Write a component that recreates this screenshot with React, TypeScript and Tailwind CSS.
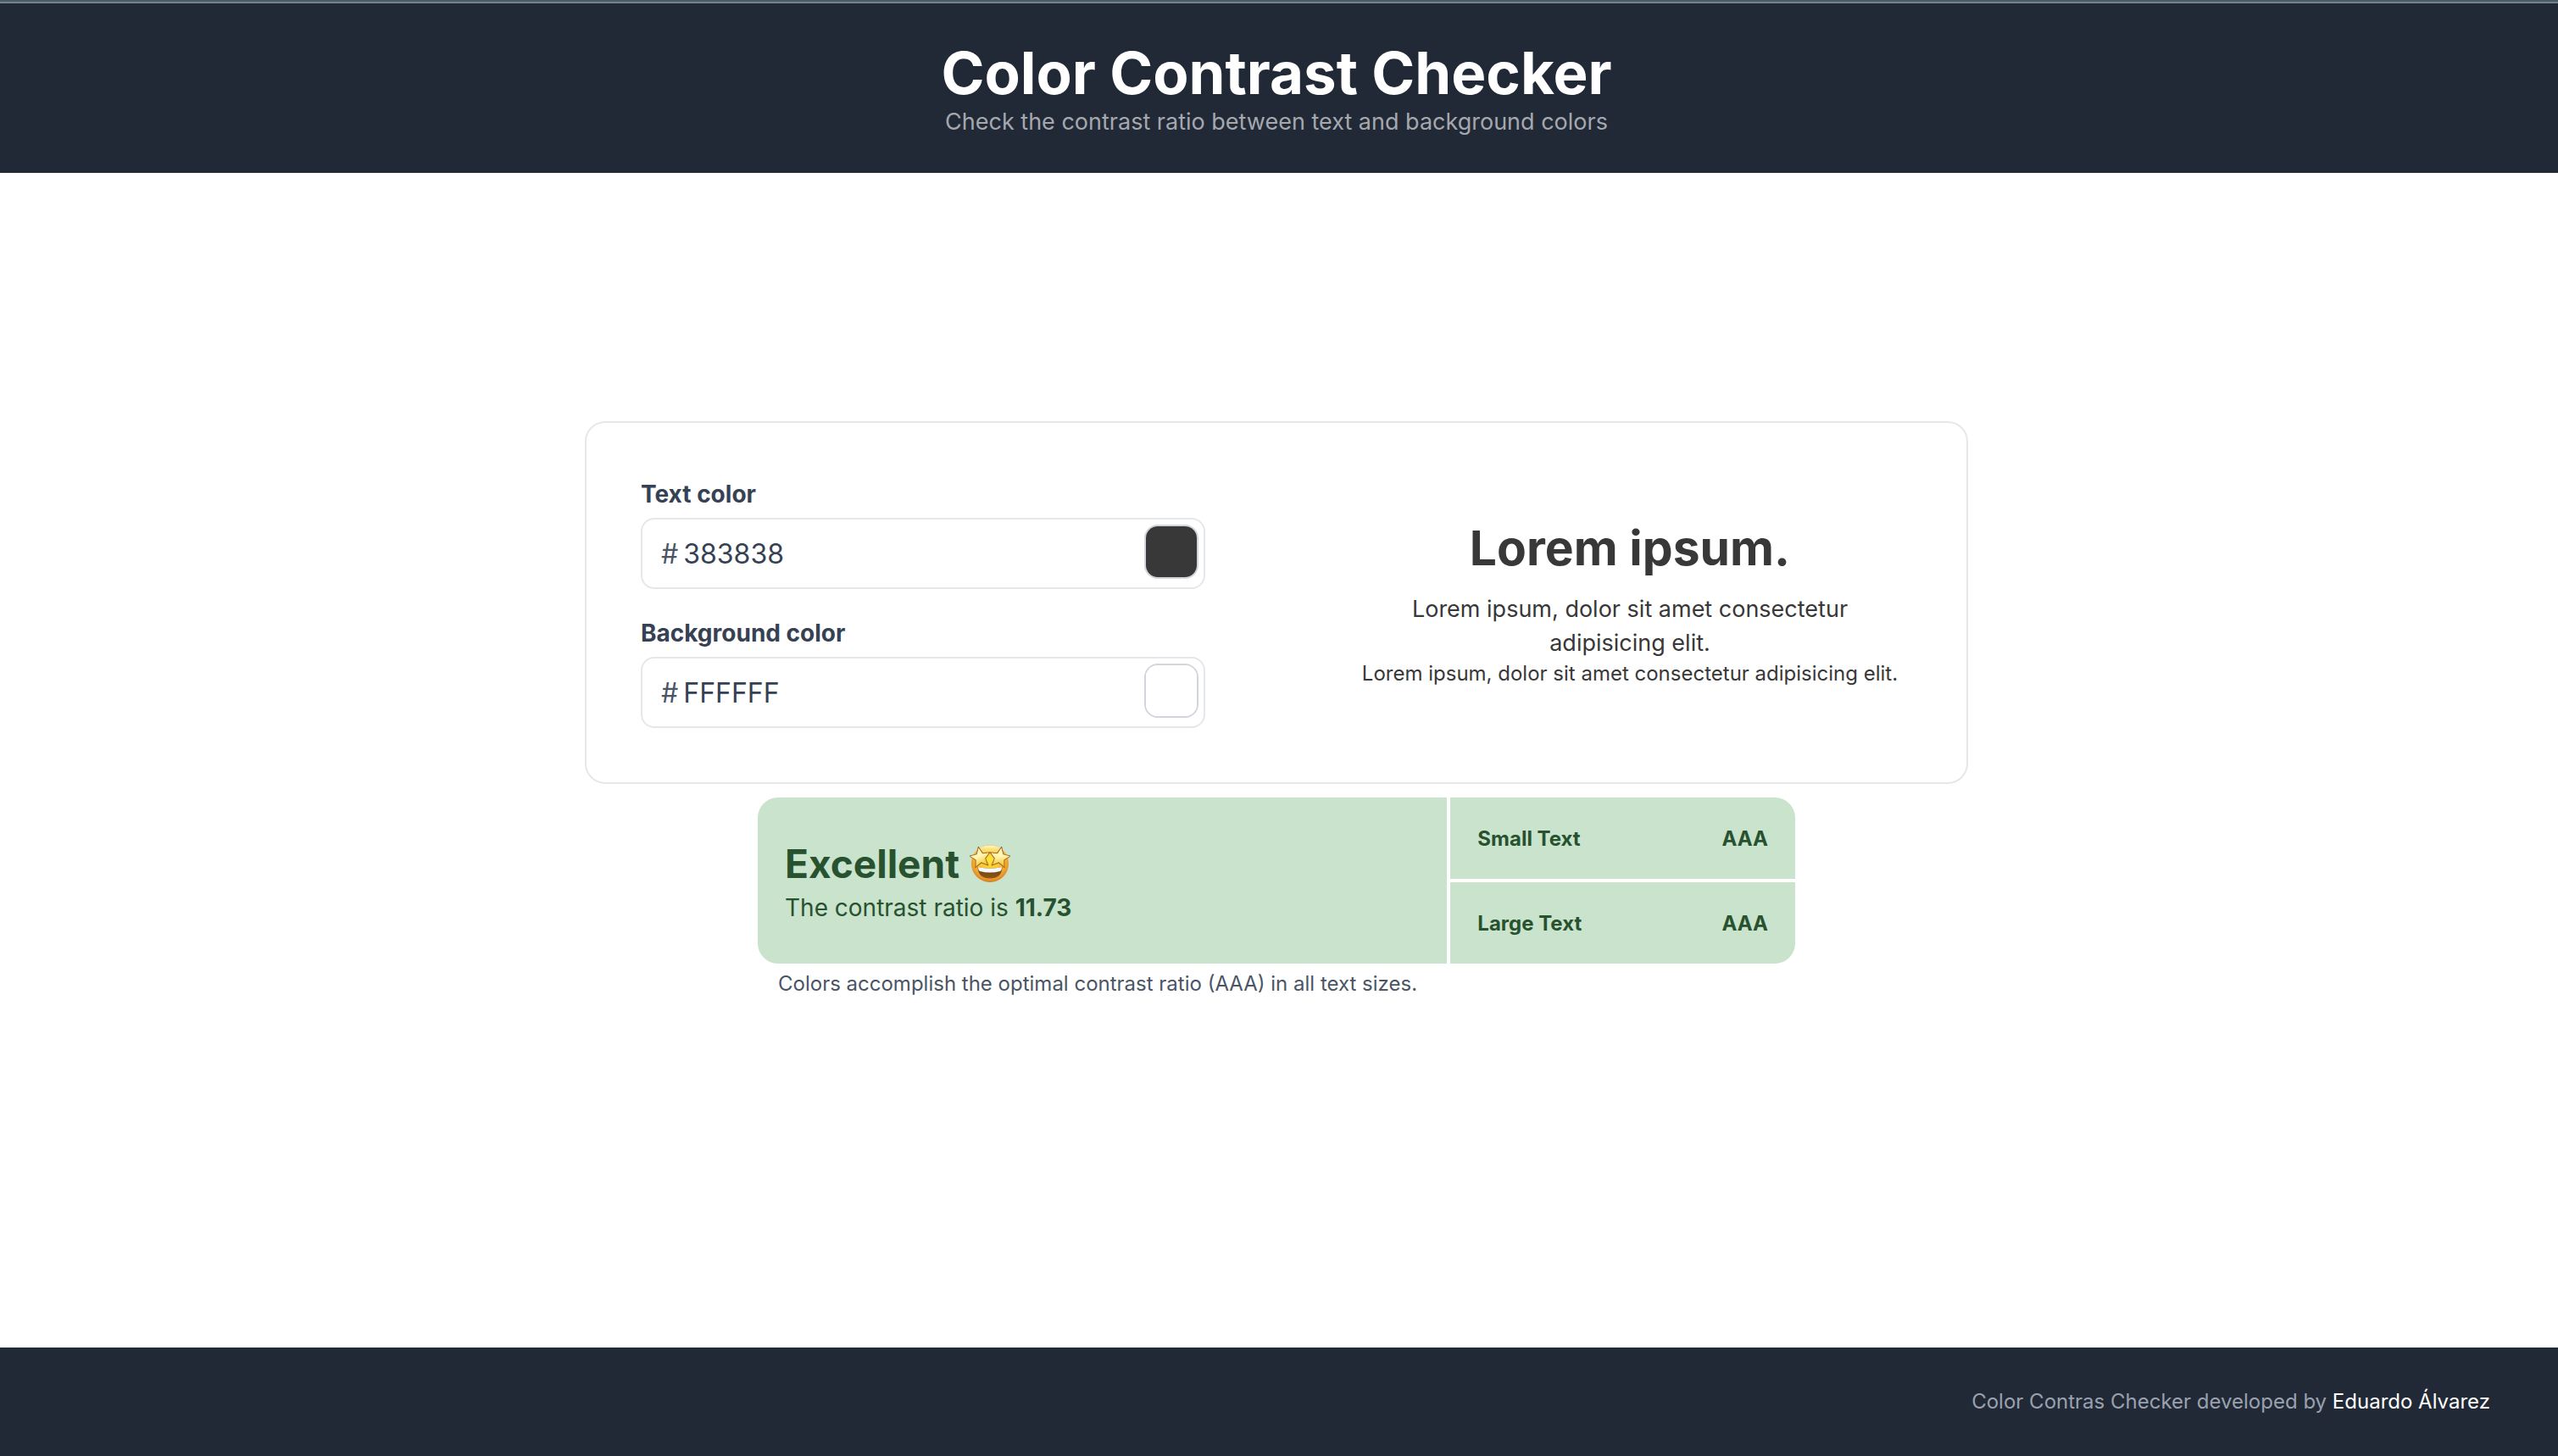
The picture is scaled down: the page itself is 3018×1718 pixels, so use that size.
import { useState } from "react";

function StarStruck() {
  const star =
    "M0 -12.5 L3.6 -4.3 L12.3 -3.6 L5.8 2.4 L7.6 11 L0 6.6 L-7.6 11 L-5.8 2.4 L-12.3 -3.6 L-3.6 -4.3 Z";
  return (
    <svg viewBox="0 0 48 46" className="h-[46px] w-12" role="img" aria-label="Star-struck">
      <defs>
        <radialGradient id="face" cx="0.5" cy="0.4" r="0.62">
          <stop offset="0" stopColor="#ffe838" />
          <stop offset="0.6" stopColor="#f7bd2f" />
          <stop offset="0.85" stopColor="#e8942a" />
          <stop offset="1" stopColor="#d0741c" />
        </radialGradient>
        <linearGradient id="shine" x1="0" y1="0" x2="0" y2="1">
          <stop offset="0" stopColor="#fffbd0" />
          <stop offset="1" stopColor="#f9d548" stopOpacity="0" />
        </linearGradient>
        <linearGradient id="star" x1="0" y1="0" x2="0.3" y2="1">
          <stop offset="0" stopColor="#fffdf0" />
          <stop offset="0.6" stopColor="#fff3a8" />
          <stop offset="1" stopColor="#f3c63a" />
        </linearGradient>
        <linearGradient id="mouth" x1="0" y1="0" x2="0" y2="1">
          <stop offset="0" stopColor="#6b3d12" />
          <stop offset="1" stopColor="#8f5714" />
        </linearGradient>
      </defs>
      <circle cx="24" cy="23" r="22" fill="url(#face)" />
      <ellipse cx="24" cy="8.5" rx="14" ry="7" fill="url(#shine)" />
      <path d="M9.5 27 Q24 30.5 38.5 27 Q38 40.5 24 40.5 Q10 40.5 9.5 27 Z" fill="url(#mouth)" />
      <path d="M10 27 Q24 30.5 38 27 Q38 31 36 32 Q24 35 12 32 Q10 31 10 27 Z" fill="#f7f8fb" />
      <g stroke="#a9651a" strokeWidth="1" strokeLinejoin="round">
        <path d={star} transform="translate(12.5 15.5) rotate(-10)" fill="url(#star)" />
        <path d={star} transform="translate(35.5 15.5) rotate(10)" fill="url(#star)" />
      </g>
    </svg>
  );
}

type ColorFieldProps = {
  id: string;
  label: string;
  value: string;
  onChange: (value: string) => void;
};

function ColorField({ id, label, value, onChange }: ColorFieldProps) {
  return (
    <div className="flex flex-col gap-2">
      <label htmlFor={id} className="text-[28px] leading-10 font-bold text-gray-700">
        {label}
      </label>
      <div className="flex h-[84px] items-center rounded-2xl border-2 border-gray-200 pr-1.5 pl-[22px]">
        <span className="pt-0.5 text-[32px] text-gray-600">#</span>
        <input
          id={id}
          value={value}
          maxLength={6}
          onChange={(e) => onChange(e.target.value.toUpperCase())}
          className="ml-1.5 min-w-0 flex-1 bg-transparent pt-0.5 text-[32px] text-gray-700 outline-none"
        />
        <input
          type="color"
          aria-label={`${label} picker`}
          value={`#${value.toLowerCase()}`}
          onChange={(e) => onChange(e.target.value.slice(1).toUpperCase())}
          className="mb-1 size-16 cursor-pointer appearance-none overflow-hidden rounded-2xl border-2 border-gray-300 bg-transparent p-0 [&::-webkit-color-swatch]:border-0 [&::-webkit-color-swatch-wrapper]:p-0"
        />
      </div>
    </div>
  );
}

function Grade({ label, grade }: { label: string; grade: string }) {
  return (
    <div className="flex items-center justify-between bg-[#c9e3cc] px-8 pt-0.5 text-[24px] leading-8 font-bold">
      <span>{label}</span>
      <span>{grade}</span>
    </div>
  );
}

export default function App() {
  const [text, setText] = useState("383838");
  const [background, setBackground] = useState("FFFFFF");

  return (
    <div className="flex min-h-screen flex-col bg-white font-['Inter',sans-serif]">
      <div className="h-1 border-b-2 border-[#74828a] bg-[#4b5b65]" />
      <header className="bg-[#212936] py-[42px] pr-1.5 text-center">
        <h1 className="text-[69px] leading-[80px] font-bold text-white">Color Contrast Checker</h1>
        <p className="text-[27px] leading-9 text-[#a5a8ae]">
          Check the contrast ratio between text and background colors
        </p>
      </header>

      <main className="flex flex-1 flex-col items-center justify-center pr-1.5 pb-[120px]">
        <section className="grid w-full max-w-[1632px] grid-cols-2 items-center gap-[168px] rounded-3xl border-2 border-gray-200 p-16">
          <form className="flex flex-col gap-8">
            <ColorField id="text-color" label="Text color" value={text} onChange={setText} />
            <ColorField
              id="background-color"
              label="Background color"
              value={background}
              onChange={setBackground}
            />
          </form>
          <div className="text-center text-[#383838]">
            <h2 className="mb-4 text-[57px] leading-[72px] font-bold">Lorem ipsum.</h2>
            <p className="px-8 text-[27px] leading-10">
              Lorem ipsum, dolor sit amet consectetur adipisicing elit.
            </p>
            <p className="text-[24px] leading-8">
              Lorem ipsum, dolor sit amet consectetur adipisicing elit.
            </p>
          </div>
        </section>

        <section className="mt-4 w-full max-w-[1224px] text-[#28522f]">
          <div className="grid grid-cols-[2fr_1fr] gap-1 overflow-hidden rounded-3xl">
            <div className="flex flex-col justify-center bg-[#c9e3cc] px-8">
              <h2 className="flex items-center gap-3 text-[46px] leading-[64px] font-bold">
                Excellent <StarStruck />
              </h2>
              <p className="text-[28px] leading-10">
                The contrast ratio is <strong>11.73</strong>
              </p>
            </div>
            <div className="grid auto-rows-[96px] gap-1">
              <Grade label="Small Text" grade="AAA" />
              <Grade label="Large Text" grade="AAA" />
            </div>
          </div>
          <p className="mt-2 px-6 text-[24px] leading-8 text-gray-600">
            Colors accomplish the optimal contrast ratio (AAA) in all text sizes.
          </p>
        </section>
      </main>

      <footer className="flex h-32 items-center justify-end bg-[#212936] px-20 text-[24px] leading-8 text-gray-400">
        <p>
          Color Contras Checker developed by{" "}
          <a href="#" className="text-white">
            Eduardo Álvarez
          </a>
        </p>
      </footer>
    </div>
  );
}
